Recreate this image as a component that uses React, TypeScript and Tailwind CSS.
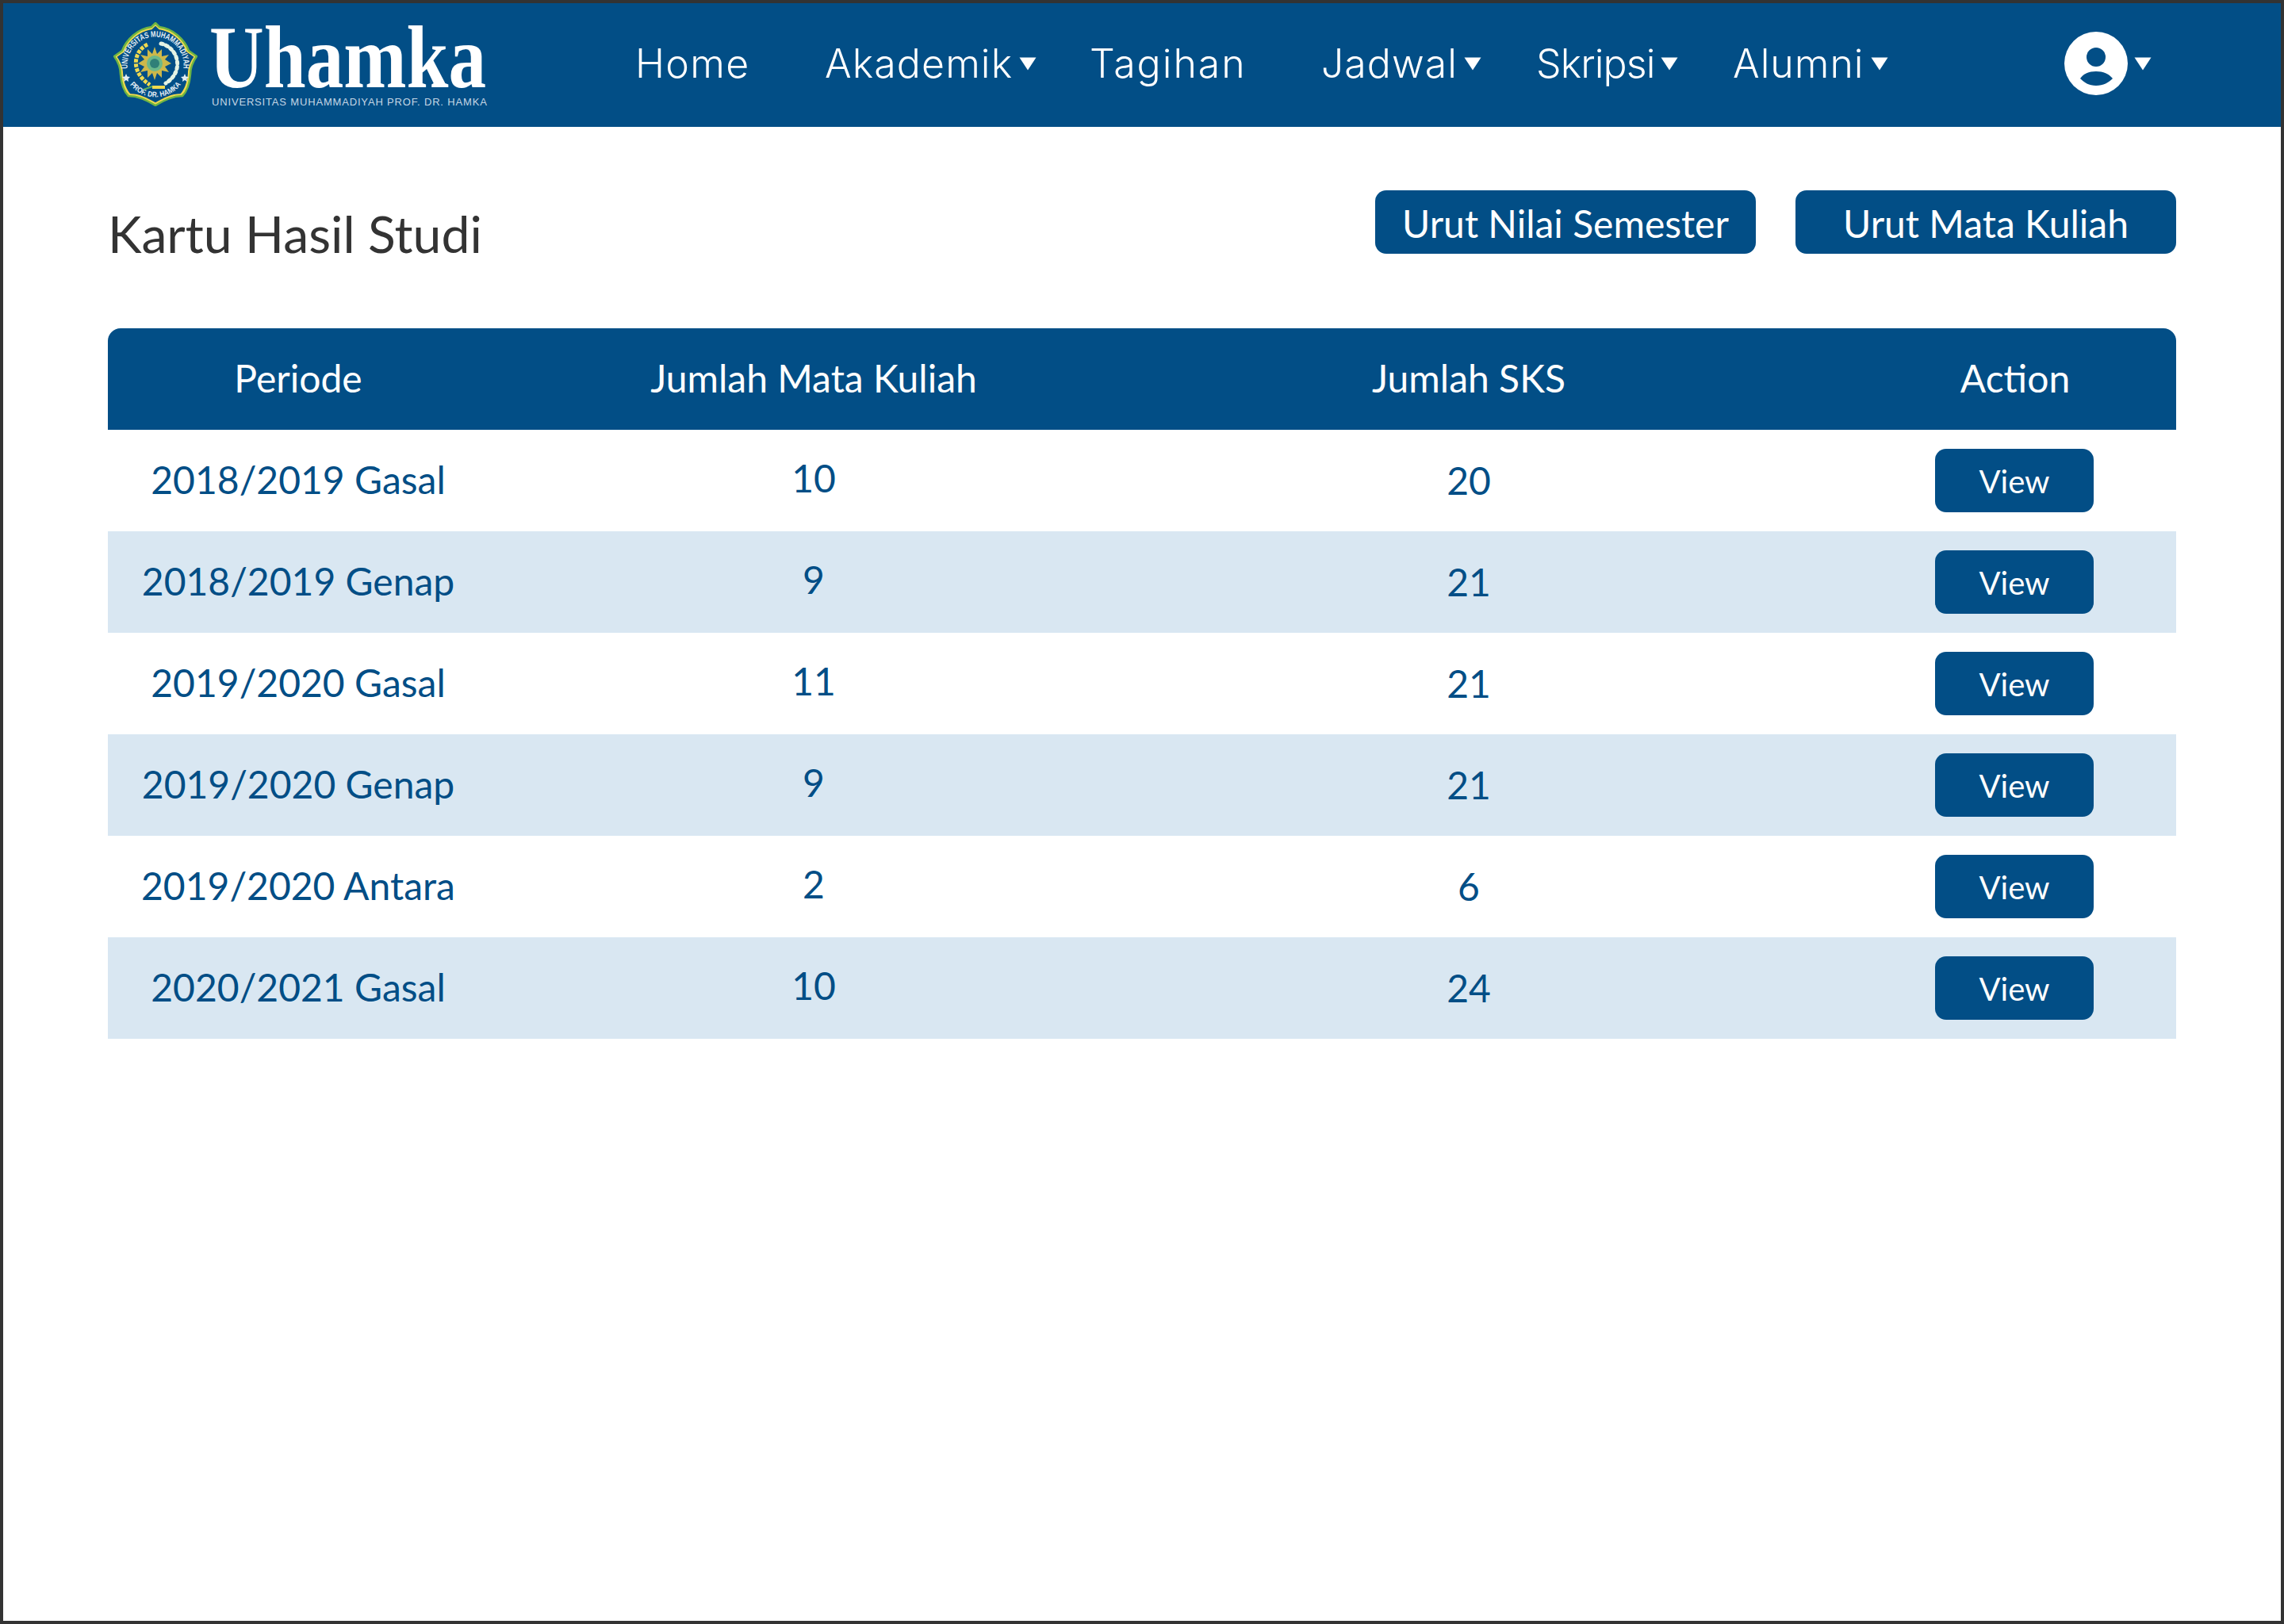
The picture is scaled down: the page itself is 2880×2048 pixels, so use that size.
import React from 'react';

const navItems = [
    { label: 'Home', width: 'w-[239px]', track: 'tracking-[1.3px]', caret: false },
    { label: 'Akademik', width: 'w-[334px]', track: 'tracking-[1.1px]', caret: true },
    { label: 'Tagihan', width: 'w-[292px]', track: 'tracking-[2px]', caret: false },
    { label: 'Jadwal', width: 'w-[271px]', track: 'tracking-[1px]', caret: true },
    { label: 'Skripsi', width: 'w-[248px]', track: 'tracking-[-0.9px]', caret: true },
    { label: 'Alumni', width: 'w-[240px]', track: 'tracking-[1px]', caret: true },
];

const rows = [
    { periode: '2018/2019 Gasal', mk: '10', sks: '20' },
    { periode: '2018/2019 Genap', mk: '9', sks: '21' },
    { periode: '2019/2020 Gasal', mk: '11', sks: '21' },
    { periode: '2019/2020 Genap', mk: '9', sks: '21' },
    { periode: '2019/2020 Antara', mk: '2', sks: '6' },
    { periode: '2020/2021 Gasal', mk: '10', sks: '24' },
];

const sealOutline = 'M53 1L58 6C75 8 90 22 95 36L105 43C100 50 97 58 97 66C96 78 92 88 87 93C75 93 65 98 53 105C41 98 31 93 19 93C14 88 10 78 9 66C9 58 6 50 1 43L11 36C16 22 31 8 48 6Z';

const Caret = () => (
    <svg width="22" height="17" viewBox="0 0 22 17" className="block">
        <path d="M0.5 0.5H21.5L11 16.5Z" fill="#fff" />
    </svg>
);

const Seal = () => (
    <svg width="106" height="106" viewBox="0 0 106 106" className="block mt-[2px]">
        <defs>
            <path id="ringTop" d="M18 60A35.500 35.500 0 1 1 88 60" />
            <path id="ringBottom" d="M14 66A41 41 0 0 0 92 66" />
        </defs>
        <path d={sealOutline} fill="#f0d94d" stroke="#6fb544" strokeWidth="2.500" />
        <path d={sealOutline} transform="translate(53 53) scale(0.93) translate(-53 -53)" fill="#024e86" />
        <text fontSize="10.5" fontWeight="700" fill="#e4edf4" fontFamily="'Liberation Sans', sans-serif">
            <textPath href="#ringTop" startOffset="50%" textAnchor="middle" textLength="120" lengthAdjust="spacingAndGlyphs">UNIVERSITAS MUHAMMADIYAH</textPath>
        </text>
        <text fontSize="9.5" fontWeight="700" fill="#e4edf4" fontFamily="'Liberation Sans', sans-serif">
            <textPath href="#ringBottom" startOffset="50%" textAnchor="middle" textLength="74" lengthAdjust="spacingAndGlyphs">PROF. DR. HAMKA</textPath>
        </text>
        {/* wreath */}
        <path d="M43 28C26 36 20 62 46 79" fill="none" stroke="#efd94f" strokeWidth="5" strokeDasharray="4.500 1.500" />
        <path d="M60 27C82 32 90 62 66 77" fill="none" stroke="#e4f3e4" strokeWidth="5" strokeLinecap="round" strokeDasharray="2.500 4" />
        <path d="M49 82H65" fill="none" stroke="#efd94f" strokeWidth="4" />
        <path d="M38 85L49 81" fill="none" stroke="#5fae5a" strokeWidth="2" />
        {/* sun */}
        <path d="M52 31L55 40L61 34L61 43L70 41L65 47L73 52L65 56L70 63L61 61L61 70L55 64L52 73L49 64L43 70L43 61L34 63L39 56L31 52L39 47L34 41L43 43L43 34L49 40Z" fill="#cdb84a" />
        <circle cx="52" cy="52" r="10" fill="#6cb88a" />
        <circle cx="52" cy="52" r="6" fill="#2f7f78" />
        <path d="M16 65L17.500 68.500L21 69L18.500 71.500L19 75L16 73L13 75L13.500 71.500L11 69L14.500 68.500Z" fill="#e4edf4" />
        <path d="M90 65L91.500 68.500L95 69L92.500 71.500L93 75L90 73L87 75L87.500 71.500L85 69L88.500 68.500Z" fill="#e4edf4" />
    </svg>
);

const AvatarIcon = () => (
    <svg width="80" height="80" viewBox="0 0 80 80" className="block">
        <circle cx="40" cy="40" r="40" fill="#fff" />
        <circle cx="40" cy="32" r="12" fill="#024e86" />
        <path d="M20 59C24 53 31 50 40 50C49 50 56 53 61 59C56 64 49 68 40 68C31 68 25 64 20 59Z" fill="#024e86" />
    </svg>
);

const App = () => {
    return (
        <div className="w-[2880px] h-[2048px] bg-white border-4 border-[#333333] overflow-hidden font-['Lato','Liberation_Sans',sans-serif]">
            <nav className="h-[156px] bg-[#024e86] flex items-center pl-[139px] pr-[163px] pb-[4px] text-white">
                <div className="flex items-center w-[658px] shrink-0">
                    <Seal />
                    <div className="ml-[18px] flex flex-col w-[350px]">
                        <span className="font-['Liberation_Serif',serif] font-bold text-[112px] leading-[78px] h-[80px] pt-[10px] -ml-[3px] origin-left scale-x-[0.85] whitespace-nowrap">Uhamka</span>
                        <span className="font-['Liberation_Sans',sans-serif] text-[13px] leading-[16px] mt-[18px] text-[#c5d6e4] whitespace-nowrap tracking-[0.83px]">UNIVERSITAS MUHAMMADIYAH PROF. DR. HAMKA</span>
                    </div>
                </div>
                <div className="flex items-center">
                    {navItems.map((item) => (
                        <div key={item.label} className={`${item.width} ${item.track} flex items-center font-['Inter',sans-serif] font-light text-[50px] leading-[60px]`}>
                            <span>{item.label}</span>
                            {item.caret && <span className="ml-[8px]"><Caret /></span>}
                        </div>
                    ))}
                </div>
                <div className="flex items-center ml-auto">
                    <AvatarIcon />
                    <span className="ml-[8px]"><Caret /></span>
                </div>
            </nav>

            <div className="ml-[132px] w-[2608px]">
                <div className="flex justify-between pt-[80px] h-[254px]">
                    <h1 className="text-[64.300px] leading-[80px] text-[#333333] font-normal pt-[15px]">Kartu Hasil Studi</h1>
                    <div className="flex gap-[50px]">
                        <button className="w-[480px] h-[80px] pt-[4px] bg-[#024e86] text-white rounded-[14px] text-[48px]">Urut Nilai Semester</button>
                        <button className="w-[480px] h-[80px] pt-[4px] bg-[#024e86] text-white rounded-[14px] text-[48px]">Urut Mata Kuliah</button>
                    </div>
                </div>

                <div className="grid grid-cols-[480px_820px_832px_1fr] h-[128px] items-center bg-[#024e86] text-white rounded-t-[16px] text-[48px] text-center">
                    <div className="pb-[2px]">Periode</div>
                    <div className="pb-[2px]">Jumlah Mata Kuliah</div>
                    <div className="pb-[2px]">Jumlah SKS</div>
                    <div className="pl-[70px] pb-[2px]">Action</div>
                </div>
                {rows.map((row, i) => (
                    <div key={i} className={`grid grid-cols-[480px_820px_832px_1fr] h-[128px] items-center text-center text-[#024e86] text-[48px] ${i % 2 === 1 ? 'bg-[#d9e7f2]' : 'bg-white'}`}>
                        <div className="pb-[2px]">{row.periode}</div>
                        <div className="pb-[6px]">{row.mk}</div>
                        <div>{row.sks}</div>
                        <div className="pl-[68px] flex justify-center">
                            <button className="w-[200px] h-[80px] pt-[2px] bg-[#024e86] text-white rounded-[14px] text-[40px]">View</button>
                        </div>
                    </div>
                ))}
            </div>
        </div>
    );
};

export default App;
